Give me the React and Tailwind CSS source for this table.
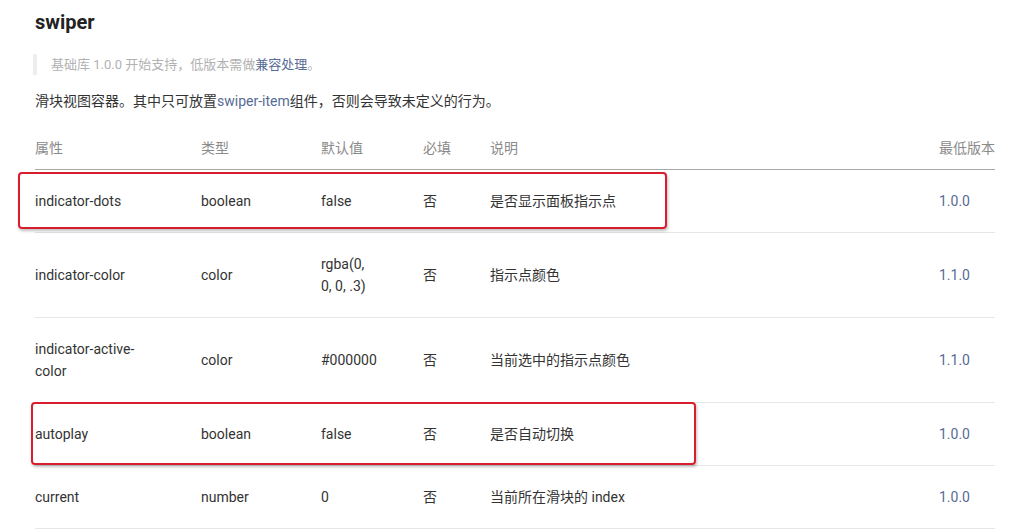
import React from "react";

const rows = [
  { name: "indicator-dots", type: "boolean", def: "false", req: "否", desc: "是否显示面板指示点", ver: "1.0.0", two: false },
  { name: "indicator-color", type: "color", def: (<>rgba(0,<br />0, 0, .3)</>), req: "否", desc: "指示点颜色", ver: "1.1.0", two: true },
  { name: (<>indicator-active-<br />color</>), type: "color", def: "#000000", req: "否", desc: "当前选中的指示点颜色", ver: "1.1.0", two: true },
  { name: "autoplay", type: "boolean", def: "false", req: "否", desc: "是否自动切换", ver: "1.0.0", two: false },
  { name: "current", type: "number", def: "0", req: "否", desc: "当前所在滑块的 index", ver: "1.0.0", two: false },
];

export default function App() {
  return (
    <div className="relative w-[1014px] h-[530px] overflow-hidden bg-white font-['Roboto','Noto_Sans_CJK_SC',sans-serif] text-[#333]">
      <div className="ml-[35px] w-[960px] pt-[10px]">
        <h1 className="text-[20px] leading-[24px] font-bold text-[#222]">swiper</h1>
        <div className="mt-[20px] -ml-[2px] border-l-4 border-[#eeeeee] pl-[14px] text-[13px] leading-[21px] text-[#b2b2b2]">
          基础库 1.0.0 开始支持，低版本需做<span className="text-[#576b95]">兼容处理</span>。
        </div>
        <p className="mt-[15px] text-[14px] leading-[22px] text-[#333]">
          滑块视图容器。其中只可放置<span className="text-[#576b95]">swiper-item</span>组件，否则会导致未定义的行为。
        </p>
        <div className="mt-[15px] text-[14px] leading-[22px]">
          <div className="grid grid-cols-[166px_120px_102px_67px_1fr_56px] items-center py-[10px] border-b border-[#a8a8a8] text-[#8a8a8a]">
            <div>属性</div>
            <div>类型</div>
            <div>默认值</div>
            <div>必填</div>
            <div>说明</div>
            <div className="text-right">最低版本</div>
          </div>
          {rows.map((r, i) => (
            <div
              key={i}
              className="grid grid-cols-[166px_120px_102px_67px_1fr_56px] items-center py-[20px] border-b border-[#e6e6e6] text-[#333]"
            >
              <div className="pr-[30px]">{r.name}</div>
              <div>{r.type}</div>
              <div>{r.def}</div>
              <div>{r.req}</div>
              <div>{r.desc}</div>
              <div className="text-[#576b95]">{r.ver}</div>
            </div>
          ))}
        </div>
      </div>
      <div className="absolute left-[18px] top-[172px] w-[649px] h-[57px] rounded-[4px] border-2 border-[#d81e2c] shadow-[1px_2px_3px_rgba(0,0,0,0.25)]"></div>
      <div className="absolute left-[31px] top-[402px] w-[665px] h-[63px] rounded-[4px] border-2 border-[#d81e2c] shadow-[1px_2px_3px_rgba(0,0,0,0.25)]"></div>
    </div>
  );
}
